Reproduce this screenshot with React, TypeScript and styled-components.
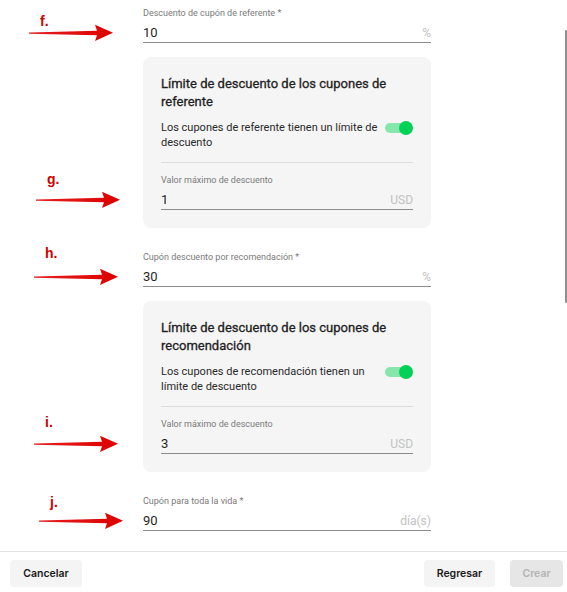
import React from 'react';
import styled, { createGlobalStyle } from 'styled-components';

const GlobalStyle = createGlobalStyle`
  html, body {
    margin: 0;
    padding: 0;
    background: #ffffff;
  }
  body {
    font-family: Roboto, "Liberation Sans", Arial, sans-serif;
    color: #212121;
  }
  * {
    box-sizing: border-box;
  }
`;

const Page = styled.div`
  width: 567px;
  height: 592px;
  display: flex;
  flex-direction: column;
  overflow: hidden;
`;

const ScrollArea = styled.div`
  position: relative;
  height: 551px;
  flex: none;
  overflow: hidden;
`;

const ScrollThumb = styled.div`
  position: absolute;
  top: 30px;
  right: 0;
  width: 2px;
  height: 273px;
  background: #8f8f8f;
  border-radius: 1px;
`;

const Form = styled.div`
  width: 288px;
  margin-left: 143px;
  padding-top: 7px;
  display: flex;
  flex-direction: column;
`;

const FieldWrap = styled.div``;

const Label = styled.div`
  font-size: 9px;
  line-height: 12px;
  color: #7a7a7a;
  margin-bottom: 4px;
  white-space: nowrap;
`;

const InputRow = styled.div`
  position: relative;
  display: flex;
  align-items: center;
  height: 20px;
  border-bottom: 1px solid #8c8c8c;
`;

const Value = styled.span`
  flex: 1;
  font-size: 13px;
  color: #1f1f1f;
`;

const Suffix = styled.span`
  font-size: 12px;
  color: #c2c2c2;
`;

const Card = styled.div`
  margin: 14px 0 23px;
  padding: 18px;
  background: #f5f5f5;
  border-radius: 8px;
`;

const CardTitle = styled.div`
  font-size: 13px;
  font-weight: 400;
  -webkit-text-stroke: 0.3px #1f1f1f;
  line-height: 18px;
  color: #1f1f1f;
  margin-bottom: 9px;
`;

const ToggleRow = styled.div`
  display: flex;
  align-items: flex-start;
  gap: 6px;
`;

const ToggleText = styled.div`
  flex: 1;
  font-size: 11px;
  line-height: 15px;
  color: #2a2a2a;
`;

const Switch = styled.span`
  position: relative;
  flex: none;
  width: 28px;
  height: 14px;
  margin-top: 1px;
`;

const Track = styled.span`
  position: absolute;
  left: 0;
  top: 2px;
  width: 24px;
  height: 10px;
  border-radius: 5px;
  background: #86e6ab;
`;

const Thumb = styled.span`
  position: absolute;
  right: 0;
  top: 0;
  width: 14px;
  height: 14px;
  border-radius: 50%;
  background: #00d257;
`;

const Divider = styled.div`
  height: 1px;
  background: #dcdcdc;
  margin: 12px 0 11px;
`;

const Annotation = styled.div<{ $gap: number }>`
  position: absolute;
  right: calc(100% + ${(p) => p.$gap}px);
  bottom: calc(50% - 9px);
  display: flex;
  flex-direction: column;
  align-items: flex-start;
`;

const MarkLetter = styled.span<{ $rise: number }>`
  margin-left: 11px;
  margin-bottom: ${(p) => p.$rise - 16}px;
  font-family: "Liberation Sans", Arial, sans-serif;
  font-weight: 700;
  font-size: 14px;
  line-height: 14px;
  color: #d10000;
`;

const Footer = styled.div`
  flex: 1;
  display: flex;
  align-items: flex-start;
  gap: 15px;
  padding: 8px 4px 0 10px;
  border-top: 1px solid #e3e3e3;
`;

const Spacer = styled.div`
  flex: 1;
`;

const Button = styled.button<{ $w: number }>`
  width: ${(p) => p.$w}px;
  height: 27px;
  border: none;
  border-radius: 4px;
  background: #f4f4f4;
  color: #1a1a1a;
  font-family: Inter, "Noto Sans", sans-serif;
  font-weight: 600;
  font-size: 10.5px;
  cursor: pointer;

  &:disabled {
    background: #e6e6e6;
    color: #b3b3b3;
    cursor: default;
  }
`;

type Mark = { letter: string; gap: number; rise: number };

const Arrow: React.FC = () => (
  <svg width="84" height="18" viewBox="0 0 84 18">
    <defs>
      <linearGradient id="arrowShade" x1="0" y1="0" x2="1" y2="0">
        <stop offset="0" stopColor="#e62020" />
        <stop offset="1" stopColor="#dd0000" />
      </linearGradient>
    </defs>
    <polygon
      points="0,8.4 68,6.8 66,0.8 84,8.8 66,17 68,11.2 0,9.8"
      fill="url(#arrowShade)"
    />
  </svg>
);

const AnnotationMark: React.FC<{ mark: Mark }> = ({ mark }) => (
  <Annotation $gap={mark.gap}>
    <MarkLetter $rise={mark.rise}>{mark.letter}</MarkLetter>
    <Arrow />
  </Annotation>
);

const Field: React.FC<{ label: string; value: string; suffix: string; mark?: Mark }> = ({
  label,
  value,
  suffix,
  mark,
}) => (
  <FieldWrap>
    <Label>{label}</Label>
    <InputRow>
      {mark && <AnnotationMark mark={mark} />}
      <Value>{value}</Value>
      <Suffix>{suffix}</Suffix>
    </InputRow>
  </FieldWrap>
);

const LimitCard: React.FC<{ title: string; text: string; value: string; mark: Mark }> = ({
  title,
  text,
  value,
  mark,
}) => (
  <Card>
    <CardTitle>{title}</CardTitle>
    <ToggleRow>
      <ToggleText>{text}</ToggleText>
      <Switch>
        <Track />
        <Thumb />
      </Switch>
    </ToggleRow>
    <Divider />
    <Field label="Valor máximo de descuento" value={value} suffix="USD" mark={mark} />
  </Card>
);

const App: React.FC = () => {
  return (
    <Page>
      <GlobalStyle />
      <ScrollArea>
        <Form>
          <Field
            label="Descuento de cupón de referente *"
            value="10"
            suffix="%"
            mark={{ letter: 'f.', gap: 30, rise: 12 }}
          />
          <LimitCard
            title="Límite de descuento de los cupones de referente"
            text="Los cupones de referente tienen un límite de descuento"
            value="1"
            mark={{ letter: 'g.', gap: 41, rise: 21 }}
          />
          <Field
            label="Cupón descuento por recomendación *"
            value="30"
            suffix="%"
            mark={{ letter: 'h.', gap: 25, rise: 24 }}
          />
          <LimitCard
            title="Límite de descuento de los cupones de recomendación"
            text="Los cupones de recomendación tienen un límite de descuento"
            value="3"
            mark={{ letter: 'i.', gap: 43, rise: 22 }}
          />
          <Field
            label="Cupón para toda la vida *"
            value="90"
            suffix="día(s)"
            mark={{ letter: 'j.', gap: 20, rise: 19 }}
          />
        </Form>
        <ScrollThumb />
      </ScrollArea>
      <Footer>
        <Button $w={72}>Cancelar</Button>
        <Spacer />
        <Button $w={71}>Regresar</Button>
        <Button $w={53} disabled>
          Crear
        </Button>
      </Footer>
    </Page>
  );
};

export default App;
